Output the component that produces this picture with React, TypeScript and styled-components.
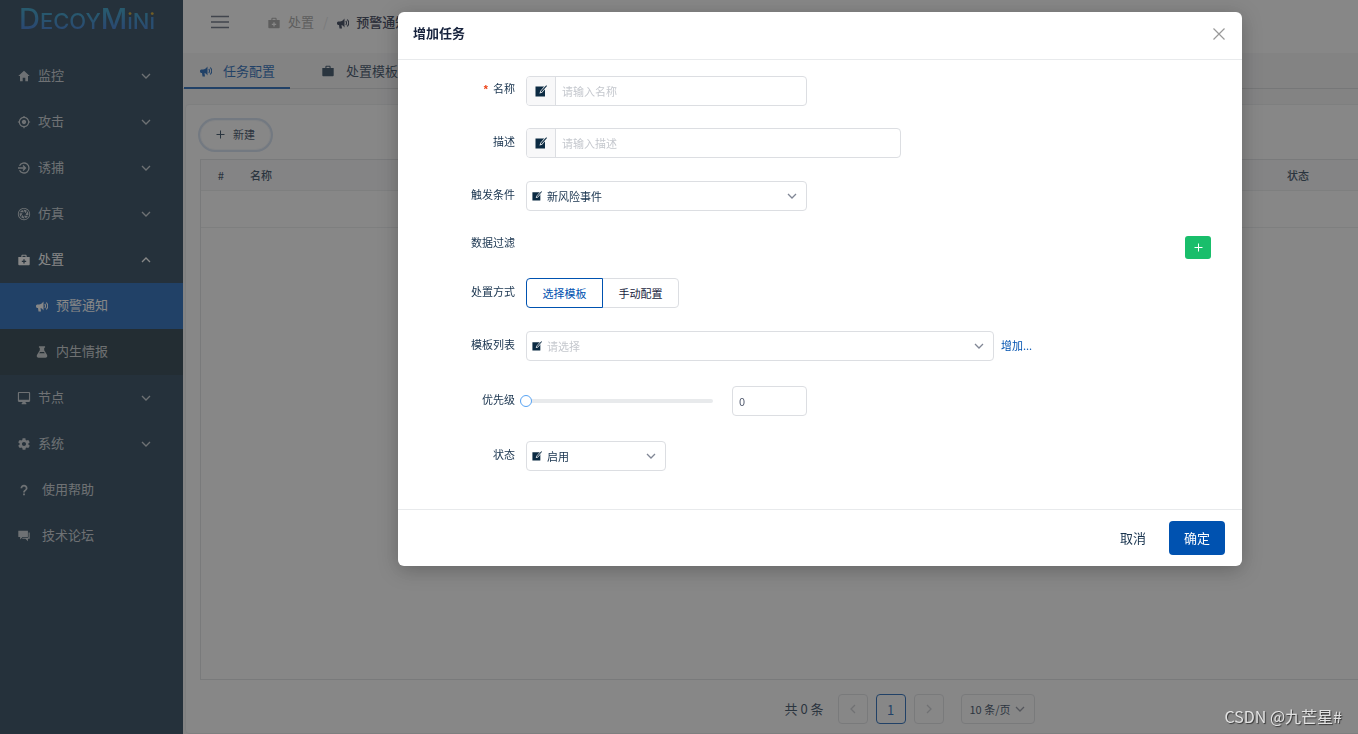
import React, { useState } from 'react';
import styled, { createGlobalStyle, css } from 'styled-components';
import {
  IoMdHome,
  IoMdLocate,
  IoMdAperture,
  IoMdMedkit,
  IoMdFlask,
  IoMdDesktop,
  IoMdSettings,
  IoMdHelp,
  IoMdChatboxes,
  IoMdBriefcase,
} from 'react-icons/io';

const color = {
  primary: '#0052b0',
  navy: '#0b2a42',
  navyDark: '#06202f',
  text: '#17324d',
  title: '#17233d',
  border: '#dcdee2',
  line: '#e8eaec',
  placeholder: '#c5c8ce',
  muted: '#808695',
  page: '#f5f5f6',
  success: '#19be6b',
  danger: '#ed4014',
};

const GlobalStyle = createGlobalStyle`
  * { box-sizing: border-box; }
  body {
    margin: 0;
    overflow: hidden;
    background: ${color.page};
    color: ${color.text};
    font-family: "Noto Sans CJK SC", sans-serif;
    font-size: 11px;
  }
  button, input, select { font: inherit; color: inherit; }
  button { cursor: pointer; }
  a { text-decoration: none; }
  svg { display: block; flex: none; }
`;

/* ---------- icons ---------- */

const MegaphoneIcon = () => (
  <svg width="12" height="12" viewBox="0 0 24 24" fill="currentColor" aria-hidden="true">
    <path d="M15 3v18c-2-3-4-4.500-6-5l1 7H5L4 16H2.500C1 16 0 14.500 0 12.500S1 9 2.500 9H6c3.500 0 6-2 9-6z" />
    <path d="M17.500 8c2 2 2 6 0 8M20.500 5c3.500 4 3.500 10 0 14" fill="none" stroke="currentColor" strokeWidth="2.200" />
  </svg>
);

const EnterIcon = () => (
  <svg width="12" height="12" viewBox="0 0 24 24" fill="none" stroke="currentColor" strokeWidth="2.600" aria-hidden="true">
    <path d="M3 7.500A10 10 0 1 1 3 16.500" />
    <path d="M0 12h14M10 7l5 5-5 5" />
  </svg>
);

const EditIcon = ({ size = 12 }: { size?: number }) => (
  <svg width={size} height={size} viewBox="0 0 24 24" aria-hidden="true">
    <path d="M1 3h19v20H1z" fill={color.navy} />
    <path d="M9 17l1.500-5L20 1h4v3L14 15.500z" fill="#fff" />
    <path d="M11 15l1-3L22.500 0.500l1.500 1.500L13.500 14z" fill={color.navy} />
  </svg>
);

const Chevron = ({ dir = 'down' }: { dir?: 'down' | 'up' | 'left' | 'right' }) => {
  const points = {
    down: '1,3 5,7 9,3',
    up: '1,7 5,3 9,7',
    left: '7,1 3,5 7,9',
    right: '3,1 7,5 3,9',
  }[dir];
  return (
    <svg width="10" height="10" viewBox="0 0 10 10" fill="none" stroke="currentColor" strokeWidth="1.300" aria-hidden="true">
      <polyline points={points} />
    </svg>
  );
};

const PlusIcon = () => (
  <svg width="9" height="9" viewBox="0 0 9 9" stroke="currentColor" aria-hidden="true">
    <path d="M4.500 0.500v8M0.500 4.500h8" />
  </svg>
);

/* ---------- frame ---------- */

const Frame = styled.div`
  display: flex;
  height: 100vh;
  overflow: hidden;
`;

const Sidebar = styled.aside`
  flex: none;
  width: 183px;
  background: ${color.navy};
  color: rgba(255, 255, 255, 0.75);
  font-size: 13px;
`;

const Logo = styled.div`
  display: flex;
  align-items: baseline;
  height: 53px;
  padding-left: 19px;
  font-family: Inter, sans-serif;
  font-size: 22px;
  font-weight: 500;
  line-height: 38px;
`;

const LogoPart = styled.span<{ $kind?: 'cap' | 'dot' }>`
  color: transparent;
  background: linear-gradient(#1290c0 25%, #1862c8 75%);
  background-clip: text;
  ${(p) => p.$kind === 'cap' && css`font-size: 29px;`}
  ${(p) => p.$kind === 'dot' && css`background-image: linear-gradient(#c8960c 38%, #1470c8 38%);`}
`;

const MenuLink = styled.a<{ $sub?: boolean; $state?: 'open' | 'active'; $wide?: boolean }>`
  display: flex;
  align-items: center;
  gap: ${(p) => (p.$wide ? 11 : 7)}px;
  height: 46px;
  padding: 0 32px 0 ${(p) => (p.$sub ? 35 : 17)}px;
  color: ${(p) => (p.$state ? '#fff' : 'inherit')};
  background: ${(p) => (p.$state === 'active' ? color.primary : 'transparent')};
`;

const MenuIcon = styled.span`
  display: flex;
  justify-content: center;
  width: 14px;
`;

const MenuText = styled.span`
  flex: 1;
  padding-bottom: 4px;
`;

const SubMenu = styled.div`
  background: ${color.navyDark};
`;

const Main = styled.main`
  display: flex;
  flex: 1;
  flex-direction: column;
  min-width: 0;
`;

const Header = styled.header`
  display: flex;
  align-items: center;
  height: 53px;
  padding: 0 28px 10px;
  background: #fff;
  font-size: 13px;
`;

const PlainButton = styled.button`
  display: flex;
  padding: 0;
  border: 0;
  background: none;
`;

const Crumbs = styled.nav`
  display: flex;
  align-items: center;
  gap: 7px;
  margin-left: 38px;
`;

const Crumb = styled.a<{ $current?: boolean }>`
  display: flex;
  align-items: center;
  gap: 7px;
  color: ${(p) => (p.$current ? color.title : '#999')};
  font-weight: ${(p) => (p.$current ? 500 : 400)};
`;

const IconDrop = styled.span`
  padding-top: 2px;
`;

const Slash = styled.span`
  padding: 0 2px;
  color: ${color.border};
`;

const Tabs = styled.div`
  display: flex;
  gap: 15px;
  height: 36px;
  padding-left: 1px;
  border-bottom: 1px solid #d4d6d9;
`;

const Tab = styled.button<{ $active?: boolean }>`
  display: flex;
  align-items: center;
  gap: 11px;
  height: 36px;
  padding: 0 15px 0 16px;
  border: 0;
  border-bottom: 2px solid ${(p) => (p.$active ? color.primary : 'transparent')};
  background: none;
  color: ${(p) => (p.$active ? color.primary : color.text)};
  font-size: 13px;
`;

const Card = styled.section`
  display: flex;
  flex: 1;
  flex-direction: column;
  width: calc(100% + 260px);
  min-height: 0;
  margin: 15px 0 0 2px;
  padding: 15px 0 9px 14px;
  border: 1px solid ${color.line};
  border-radius: 4px;
  background: #fff;
`;

const NewButton = styled.button`
  display: flex;
  align-items: center;
  align-self: flex-start;
  gap: 8px;
  height: 30px;
  margin-bottom: 9px;
  padding: 0 15px 2px;
  border: 1px solid #f0f4fa;
  border-radius: 15px;
  background: #fff;
  box-shadow: 0 0 0 2px rgba(0, 82, 176, 0.2);
`;

const TableBox = styled.div`
  flex: 1;
  border: 1px solid ${color.border};
`;

const Table = styled.table`
  width: 100%;
  border-collapse: collapse;
  table-layout: fixed;

  th {
    height: 30px;
    padding: 0 9px;
    border-bottom: 1px solid ${color.line};
    background: #f8f8f9;
    font-weight: 500;
    text-align: left;
  }
  th:first-child {
    width: 40px;
    padding: 0;
    text-align: center;
  }
  th:last-child {
    width: 340px;
  }
  td {
    height: 37px;
    border-bottom: 1px solid ${color.line};
  }
`;

const Pager = styled.nav`
  display: flex;
  align-items: center;
  justify-content: center;
  gap: 8px;
  padding-top: 14px;
  font-size: 13px;
`;

const PagerTotal = styled.span`
  margin-right: 6px;
  padding-bottom: 2px;
`;

const PageButton = styled.button<{ $active?: boolean }>`
  display: flex;
  align-items: center;
  justify-content: center;
  width: 30px;
  height: 30px;
  padding: 0;
  border: 1px solid ${(p) => (p.$active ? color.primary : color.border)};
  border-radius: 4px;
  background: #fff;
  color: ${(p) => (p.$active ? color.primary : color.placeholder)};
`;

/* ---------- form controls ---------- */

const Box = styled.div<{ $width: number }>`
  display: flex;
  align-items: center;
  width: ${(p) => p.$width}px;
  height: 30px;
  border: 1px solid ${color.border};
  border-radius: 4px;
  background: #fff;
  color: ${color.muted};
  overflow: hidden;
`;

const SelectBox = styled(Box)`
  gap: 5px;
  padding: 0 9px 0 5px;
`;

const PagerSelect = styled(Box)`
  margin-left: 9px;
  padding: 0 9px 0 8px;
`;

const Select = styled.select<{ $empty?: boolean }>`
  flex: 1;
  min-width: 0;
  height: 28px;
  padding: 0;
  border: 0;
  outline: 0;
  appearance: none;
  background: none;
  color: ${(p) => (p.$empty ? color.placeholder : color.text)};
  font-size: 11px;
`;

const Addon = styled.span`
  display: flex;
  align-items: center;
  justify-content: center;
  width: 29px;
  height: 28px;
  border-right: 1px solid ${color.border};
  background: #f8f8f9;
`;

const TextInput = styled.input`
  flex: 1;
  min-width: 0;
  height: 28px;
  padding: 0 6px;
  border: 0;
  outline: 0;
  background: none;
  color: #515a6e;

  &::placeholder {
    color: ${color.placeholder};
  }
`;

const Segments = styled.div`
  display: flex;
`;

const Segment = styled.label<{ $checked: boolean }>`
  display: flex;
  align-items: center;
  justify-content: center;
  width: 77px;
  height: 30px;
  border: 1px solid ${(p) => (p.$checked ? color.primary : color.border)};
  background: #fff;
  color: ${(p) => (p.$checked ? color.primary : color.title)};
  z-index: ${(p) => (p.$checked ? 1 : 0)};
  cursor: pointer;

  &:first-child { border-radius: 4px 0 0 4px; }
  &:last-child { margin-left: -1px; border-radius: 0 4px 4px 0; }

  input {
    width: 0;
    height: 0;
    margin: 0;
    appearance: none;
  }
`;

const Range = styled.input`
  width: 193px;
  height: 12px;
  margin: 0 19px 0 -6px;
  appearance: none;
  background: none;

  &::-webkit-slider-runnable-track {
    height: 4px;
    border-radius: 2px;
    background: ${color.line};
  }
  &::-webkit-slider-thumb {
    width: 12px;
    height: 12px;
    margin-top: -4px;
    border: 1px solid #57a3f3;
    border-radius: 50%;
    appearance: none;
    background: #fff;
  }
`;

const AddButton = styled.button`
  display: flex;
  align-items: center;
  justify-content: center;
  width: 26px;
  height: 23px;
  margin-left: auto;
  padding: 0;
  border: 0;
  border-radius: 3px;
  background: ${color.success};
  color: #fff;
`;

const TextLink = styled.a`
  margin-left: 7px;
  padding-bottom: 2px;
  color: ${color.primary};
`;

/* ---------- dialog ---------- */

const Mask = styled.div`
  position: fixed;
  inset: 0;
  display: flex;
  align-items: flex-start;
  justify-content: flex-end;
  padding: 12px 116px 0 0;
  background: rgba(55, 55, 55, 0.6);
`;

const Dialog = styled.section`
  width: 844px;
  border-radius: 6px;
  background: #fff;
  box-shadow: 0 4px 20px rgba(0, 0, 0, 0.25);
`;

const DialogHead = styled.header`
  display: flex;
  align-items: center;
  justify-content: space-between;
  height: 48px;
  padding: 0 17px 4px 15px;
  border-bottom: 1px solid ${color.line};
  color: #999;
`;

const DialogTitle = styled.h1`
  margin: 0;
  padding-bottom: 2px;
  color: ${color.title};
  font-size: 13px;
  font-weight: 700;
`;

const DialogForm = styled.form`
  display: flex;
  flex-direction: column;
  padding: 16px 31px 38px 0;
`;

const Row = styled.div<{ $gap?: number; $short?: boolean }>`
  display: flex;
  align-items: center;
  height: ${(p) => (p.$short ? 23 : 30)}px;
  margin-bottom: ${(p) => p.$gap || 0}px;
`;

const rowLabel = css<{ $required?: boolean; $raised?: boolean }>`
  width: 117px;
  margin-right: 11px;
  padding-bottom: ${(p) => (p.$raised ? 12 : 4)}px;
  line-height: 16px;
  text-align: right;

  ${(p) =>
    p.$required &&
    css`
      &::before {
        content: '*';
        margin-right: 4px;
        color: ${color.danger};
        font-family: "Liberation Mono", monospace;
        font-weight: 700;
      }
    `}
`;

const Label = styled.label`${rowLabel}`;
const Caption = styled.span`${rowLabel}`;

const DialogFoot = styled.footer`
  display: flex;
  justify-content: flex-end;
  gap: 8px;
  padding: 11px 17px;
  border-top: 1px solid ${color.line};
`;

const FootButton = styled.button<{ $primary?: boolean }>`
  width: 56px;
  height: 34px;
  padding: 0 0 2px;
  border: 0;
  border-radius: 4px;
  background: ${(p) => (p.$primary ? color.primary : 'transparent')};
  color: ${(p) => (p.$primary ? '#fff' : color.text)};
  font-size: 13px;
`;

const Watermark = styled.div`
  position: fixed;
  right: 16px;
  bottom: 7px;
  color: #e2e2e2;
  font-size: 16px;
  line-height: 22px;
  text-shadow: 1px 1px 1px rgba(0, 0, 0, 0.6);
`;

/* ---------- content ---------- */

const topMenu = [
  { text: '监控', icon: <IoMdHome size={14} /> },
  { text: '攻击', icon: <IoMdLocate size={14} /> },
  { text: '诱捕', icon: <EnterIcon /> },
  { text: '仿真', icon: <IoMdAperture size={14} /> },
];

const lowerMenu = [
  { text: '节点', icon: <IoMdDesktop size={14} /> },
  { text: '系统', icon: <IoMdSettings size={14} /> },
];

const linkMenu = [
  { text: '使用帮助', icon: <IoMdHelp size={14} /> },
  { text: '技术论坛', icon: <IoMdChatboxes size={14} /> },
];

type Item = { text: string; icon: React.ReactNode };

const MenuGroup = ({ items, plain }: { items: Item[]; plain?: boolean }) => (
  <>
    {items.map((item) => (
      <MenuLink href="#" key={item.text} $wide={plain}>
        <MenuIcon>{item.icon}</MenuIcon>
        <MenuText>{item.text}</MenuText>
        {!plain && <Chevron />}
      </MenuLink>
    ))}
  </>
);

const SideMenu = () => (
  <Sidebar>
    <Logo>
      <LogoPart $kind="cap">D</LogoPart>
      <LogoPart>ECOY</LogoPart>
      <LogoPart $kind="cap">M</LogoPart>
      <LogoPart $kind="dot">i</LogoPart>
      <LogoPart>N</LogoPart>
      <LogoPart $kind="dot">i</LogoPart>
    </Logo>
    <nav>
      <MenuGroup items={topMenu} />
      <MenuLink href="#" $state="open">
        <MenuIcon><IoMdMedkit size={14} /></MenuIcon>
        <MenuText>处置</MenuText>
        <Chevron dir="up" />
      </MenuLink>
      <SubMenu>
        <MenuLink href="#" $sub $state="active">
          <MenuIcon><MegaphoneIcon /></MenuIcon>
          <MenuText>预警通知</MenuText>
        </MenuLink>
        <MenuLink href="#" $sub>
          <MenuIcon><IoMdFlask size={14} /></MenuIcon>
          <MenuText>内生情报</MenuText>
        </MenuLink>
      </SubMenu>
      <MenuGroup items={lowerMenu} />
      <MenuGroup items={linkMenu} plain />
    </nav>
  </Sidebar>
);

const TaskPage = () => (
  <Main>
    <Header>
      <PlainButton aria-label="菜单">
        <svg width="18" height="14" viewBox="0 0 18 14" stroke="#515a6e" strokeWidth="1.500">
          <path d="M0 1.500h18M0 7h18M0 12.500h18" />
        </svg>
      </PlainButton>
      <Crumbs>
        <Crumb href="#">
          <IconDrop><IoMdMedkit size={14} /></IconDrop>
          处置
        </Crumb>
        <Slash>/</Slash>
        <Crumb href="#" $current>
          <IconDrop><MegaphoneIcon /></IconDrop>
          预警通知
        </Crumb>
      </Crumbs>
    </Header>
    <Tabs>
      <Tab $active>
        <IconDrop><MegaphoneIcon /></IconDrop>
        任务配置
      </Tab>
      <Tab>
        <IconDrop><IoMdBriefcase size={14} /></IconDrop>
        处置模板
      </Tab>
    </Tabs>
    <Card>
      <NewButton>
        <PlusIcon />
        新建
      </NewButton>
      <TableBox>
        <Table>
          <thead>
            <tr>
              <th>#</th>
              <th>名称</th>
              <th>状态</th>
            </tr>
          </thead>
          <tbody>
            <tr>
              <td colSpan={3} />
            </tr>
          </tbody>
        </Table>
      </TableBox>
      <Pager>
        <PagerTotal>共 0 条</PagerTotal>
        <PageButton aria-label="上一页">
          <Chevron dir="left" />
        </PageButton>
        <PageButton $active>1</PageButton>
        <PageButton aria-label="下一页">
          <Chevron dir="right" />
        </PageButton>
        <PagerSelect $width={74}>
          <Select aria-label="每页条数">
            <option>10 条/页</option>
          </Select>
          <Chevron />
        </PagerSelect>
      </Pager>
    </Card>
  </Main>
);

const TaskDialog = () => {
  const [mode, setMode] = useState('选择模板');
  const [level, setLevel] = useState(0);
  return (
    <Dialog role="dialog" aria-labelledby="dialog-title">
      <DialogHead>
        <DialogTitle id="dialog-title">增加任务</DialogTitle>
        <PlainButton aria-label="关闭">
          <svg width="12" height="12" viewBox="0 0 12 12" stroke="#999" strokeWidth="1.200">
            <path d="M0.500 0.500l11 11M11.500 0.500l-11 11" />
          </svg>
        </PlainButton>
      </DialogHead>
      <DialogForm>
        <Row $gap={22}>
          <Label htmlFor="name" $required>名称</Label>
          <Box $width={281}>
            <Addon><EditIcon /></Addon>
            <TextInput id="name" placeholder="请输入名称" />
          </Box>
        </Row>
        <Row $gap={23}>
          <Label htmlFor="desc">描述</Label>
          <Box $width={375}>
            <Addon><EditIcon /></Addon>
            <TextInput id="desc" placeholder="请输入描述" />
          </Box>
        </Row>
        <Row $gap={25}>
          <Label htmlFor="trigger">触发条件</Label>
          <SelectBox $width={281}>
            <EditIcon size={10} />
            <Select id="trigger">
              <option>新风险事件</option>
            </Select>
            <Chevron />
          </SelectBox>
        </Row>
        <Row $gap={19} $short>
          <Caption $raised>数据过滤</Caption>
          <AddButton type="button" aria-label="添加过滤">
            <PlusIcon />
          </AddButton>
        </Row>
        <Row $gap={23}>
          <Caption id="mode-label">处置方式</Caption>
          <Segments role="radiogroup" aria-labelledby="mode-label">
            {['选择模板', '手动配置'].map((name) => (
              <Segment key={name} $checked={mode === name}>
                <input type="radio" name="mode" checked={mode === name} onChange={() => setMode(name)} />
                {name}
              </Segment>
            ))}
          </Segments>
        </Row>
        <Row $gap={25}>
          <Label htmlFor="template">模板列表</Label>
          <SelectBox $width={468}>
            <EditIcon size={10} />
            <Select id="template" $empty>
              <option>请选择</option>
            </Select>
            <Chevron />
          </SelectBox>
          <TextLink href="#">增加...</TextLink>
        </Row>
        <Row $gap={25}>
          <Label htmlFor="level">优先级</Label>
          <Range
            id="level"
            type="range"
            min={0}
            max={100}
            value={level}
            onChange={(e) => setLevel(Number(e.target.value))}
          />
          <Box $width={75}>
            <TextInput
              aria-label="优先级数值"
              value={level}
              onChange={(e) => setLevel(Number(e.target.value) || 0)}
            />
          </Box>
        </Row>
        <Row>
          <Label htmlFor="status">状态</Label>
          <SelectBox $width={140}>
            <EditIcon size={10} />
            <Select id="status">
              <option>启用</option>
            </Select>
            <Chevron />
          </SelectBox>
        </Row>
      </DialogForm>
      <DialogFoot>
        <FootButton type="button">取消</FootButton>
        <FootButton type="button" $primary>确定</FootButton>
      </DialogFoot>
    </Dialog>
  );
};

export default function App() {
  return (
    <>
      <GlobalStyle />
      <Frame>
        <SideMenu />
        <TaskPage />
      </Frame>
      <Mask>
        <TaskDialog />
      </Mask>
      <Watermark>CSDN @九芒星#</Watermark>
    </>
  );
}
